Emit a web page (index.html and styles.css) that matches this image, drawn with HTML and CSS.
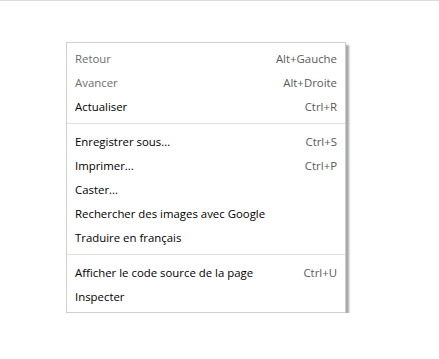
FILE: index.html
```html
<!DOCTYPE html>
<html lang="fr">
<head>
<meta charset="utf-8">
<link rel="stylesheet" href="styles.css">
</head>
<body>
<div class="topline"></div>
<div class="menu">
  <div class="item disabled"><span class="label">Retour</span><span class="key">Alt+Gauche</span></div>
  <div class="item disabled"><span class="label">Avancer</span><span class="key">Alt+Droite</span></div>
  <div class="item"><span class="label">Actualiser</span><span class="key">Ctrl+R</span></div>
  <div class="sep"></div>
  <div class="item"><span class="label">Enregistrer sous...</span><span class="key">Ctrl+S</span></div>
  <div class="item"><span class="label">Imprimer...</span><span class="key">Ctrl+P</span></div>
  <div class="item"><span class="label">Caster...</span></div>
  <div class="item"><span class="label">Rechercher des images avec Google</span></div>
  <div class="item"><span class="label">Traduire en français</span></div>
  <div class="sep"></div>
  <div class="item"><span class="label">Afficher le code source de la page</span><span class="key">Ctrl+U</span></div>
  <div class="item"><span class="label">Inspecter</span></div>
</div>
</body>
</html>
```
FILE: styles.css
```css
html, body {
  margin: 0;
  padding: 0;
  background: #ffffff;
}
body {
  font-family: "Open Sans", "Noto Sans", "Liberation Sans", sans-serif;
  font-size: 11.4px;
}
.topline {
  height: 1px;
  background: #dadada;
}
.menu {
  margin: 41px 0 0 66px;
  width: 278px;
  border: 1px solid #cfcfcf;
  background: #ffffff;
  padding: 3px 0 4px;
  box-shadow: 3px 3px 2px 0 rgba(0, 0, 0, 0.35);
}
.item {
  height: 24px;
  display: flex;
  align-items: center;
  justify-content: space-between;
  padding: 0 8px;
  color: #000000;
}
.item.disabled .label {
  color: #6d6d6d;
}
.key {
  color: #5a5a5a;
}
.sep {
  height: 1px;
  background: #dedede;
  margin: 5px 0;
}
```
